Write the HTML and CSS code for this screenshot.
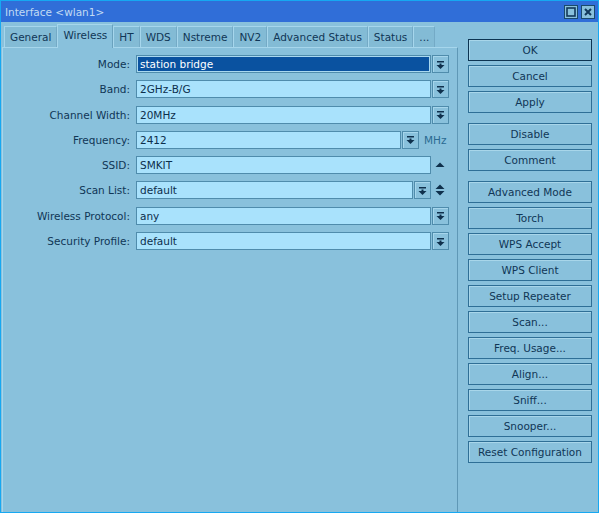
FILE: index.html
```html
<!DOCTYPE html>
<html lang="en">
<head>
    <meta charset="UTF-8">
    <title>Interface &lt;wlan1&gt;</title>
    <link rel="stylesheet" href="styles.css">
</head>
<body>
<div class="win">
    <div class="titlebar">
        <span class="title">Interface &lt;wlan1&gt;</span>
        <div class="wbtns">
            <span class="wbtn"><svg width="12" height="12" viewBox="0 0 12 12"><rect x="2" y="2" width="8" height="8" fill="none" stroke="#12385a" stroke-width="1.6"/></svg></span>
            <span class="wbtn"><svg width="12" height="12" viewBox="0 0 12 12"><path d="M3 3L9 9M9 3L3 9" stroke="#12385a" stroke-width="2"/></svg></span>
        </div>
    </div>
    <div class="body">
        <div class="main">
            <div class="tabs">
                <span class="tab">General</span>
                <span class="tab active">Wireless</span>
                <span class="tab">HT</span>
                <span class="tab">WDS</span>
                <span class="tab">Nstreme</span>
                <span class="tab">NV2</span>
                <span class="tab">Advanced Status</span>
                <span class="tab">Status</span>
                <span class="tab">...</span>
            </div>
            <div class="panel">
                <div class="row">
                    <label>Mode:</label>
                    <div class="field sel">station bridge</div>
                    <span class="dd"><svg width="9" height="9" viewBox="0 0 9 9"><path d="M1 1h7v1.5H1zM3.5 3.5h2V5H3.5zM0.5 5h8L4.5 9z" fill="#0f304c"/></svg></span>
                </div>
                <div class="row">
                    <label>Band:</label>
                    <div class="field">2GHz-B/G</div>
                    <span class="dd"><svg width="9" height="9" viewBox="0 0 9 9"><path d="M1 1h7v1.5H1zM3.5 3.5h2V5H3.5zM0.5 5h8L4.5 9z" fill="#0f304c"/></svg></span>
                </div>
                <div class="row">
                    <label>Channel Width:</label>
                    <div class="field">20MHz</div>
                    <span class="dd"><svg width="9" height="9" viewBox="0 0 9 9"><path d="M1 1h7v1.5H1zM3.5 3.5h2V5H3.5zM0.5 5h8L4.5 9z" fill="#0f304c"/></svg></span>
                </div>
                <div class="row">
                    <label>Frequency:</label>
                    <div class="field short">2412</div>
                    <span class="dd"><svg width="9" height="9" viewBox="0 0 9 9"><path d="M1 1h7v1.5H1zM3.5 3.5h2V5H3.5zM0.5 5h8L4.5 9z" fill="#0f304c"/></svg></span>
                    <span class="unit">MHz</span>
                </div>
                <div class="row">
                    <label>SSID:</label>
                    <div class="field">SMKIT</div>
                    <span class="arrows"><svg width="12" height="12" viewBox="0 0 12 12"><path d="M1.5 8h9L6 3.5z" fill="#0f304c"/></svg></span>
                </div>
                <div class="row">
                    <label>Scan List:</label>
                    <div class="field mid">default</div>
                    <span class="dd"><svg width="9" height="9" viewBox="0 0 9 9"><path d="M1 1h7v1.5H1zM3.5 3.5h2V5H3.5zM0.5 5h8L4.5 9z" fill="#0f304c"/></svg></span>
                    <span class="arrows"><svg width="12" height="14" viewBox="0 0 12 14"><path d="M1.5 6h9L6 1.5zM1.5 8h9L6 12.5z" fill="#0f304c"/></svg></span>
                </div>
                <div class="row">
                    <label>Wireless Protocol:</label>
                    <div class="field">any</div>
                    <span class="dd"><svg width="9" height="9" viewBox="0 0 9 9"><path d="M1 1h7v1.5H1zM3.5 3.5h2V5H3.5zM0.5 5h8L4.5 9z" fill="#0f304c"/></svg></span>
                </div>
                <div class="row">
                    <label>Security Profile:</label>
                    <div class="field">default</div>
                    <span class="dd"><svg width="9" height="9" viewBox="0 0 9 9"><path d="M1 1h7v1.5H1zM3.5 3.5h2V5H3.5zM0.5 5h8L4.5 9z" fill="#0f304c"/></svg></span>
                </div>
            </div>
        </div>
        <div class="side">
            <div class="grp">
                <span class="btn def">OK</span>
                <span class="btn">Cancel</span>
                <span class="btn">Apply</span>
            </div>
            <div class="grp">
                <span class="btn">Disable</span>
                <span class="btn">Comment</span>
            </div>
            <div class="grp">
                <span class="btn">Advanced Mode</span>
                <span class="btn">Torch</span>
                <span class="btn">WPS Accept</span>
                <span class="btn">WPS Client</span>
                <span class="btn">Setup Repeater</span>
                <span class="btn">Scan...</span>
                <span class="btn">Freq. Usage...</span>
                <span class="btn">Align...</span>
                <span class="btn">Sniff...</span>
                <span class="btn">Snooper...</span>
                <span class="btn">Reset Configuration</span>
            </div>
        </div>
    </div>
</div>
</body>
</html>
```
FILE: styles.css
```css
* {margin: 0; padding: 0; box-sizing: border-box;}
html, body {width: 599px; height: 513px; overflow: hidden;}
body {font-family: "DejaVu Sans", sans-serif; font-size: 10.5px; color: #103656; background: #89c1dc;}

.win {width: 599px; height: 513px; border: 1px solid #16a8f2; display: flex; flex-direction: column; background: #89c1dc;}
.titlebar {height: 21px; background: #306ed8; display: flex; align-items: center; justify-content: space-between; padding: 0 3px 0 4px;}
.title {color: #c2dbf3; font-size: 10.5px;}
.wbtns {display: flex; gap: 3px;}
.wbtn {width: 14px; height: 14px; background: #89c1dc; border: 1px solid #1b4a6c; display: flex; align-items: center; justify-content: center;}

.body {flex: 1; display: flex;}
.main {width: 457px; display: flex; flex-direction: column; padding-left: 1px;}

.tabs {display: flex; align-items: flex-end; padding-left: 2px; height: 25px;}
.tab {height: 21px; line-height: 20px; padding: 0 5px; border-top: 1px solid #a6d6ec; border-left: 1px solid #a6d6ec; border-right: 1px solid #74aac6; background: #83bbd5; color: #103656;}
.tab.active {height: 24px; margin-bottom: -1px; background: #89c1dc; position: relative; z-index: 1; line-height: 20px; border-right-color: #6aa2be;}

.panel {flex: 1; border-top: 1px solid #a6d6ec; border-left: 1px solid #a6d6ec; border-right: 1px solid #5f98b6; padding-top: 7px; display: flex; flex-direction: column; gap: 7.3px;}
.row {display: flex; align-items: center; height: 18px;}
.row label {width: 127px; text-align: right; margin-right: 6px;}
.field {width: 295px; height: 18px; line-height: 16px; padding-left: 3px; background: #a9e2fc; border: 1px solid #4f8cac; color: #0d2f4c;}
.field.short {width: 265px;}
.field.mid {width: 277px;}
.field.sel {background: #0a52a0; color: #fff; border-color: #4f8cac; box-shadow: inset 0 0 0 1px #a9d8f0;}
.dd {width: 17px; height: 18px; margin-left: 1px; border: 1px solid #4f8cac; box-shadow: inset 1px 1px 0 #a6d6ec; display: flex; align-items: center; justify-content: center;}
.unit {margin-left: 5px; color: #2a6a92;}
.arrows {margin-left: 3px; width: 12px; display: flex; align-items: center; justify-content: center;}

.side {flex: 1; padding: 17px 0 0 10px;}
.grp {display: flex; flex-direction: column; gap: 4px; margin-bottom: 10px;}
.btn {width: 124px; height: 22px; line-height: 20px; text-align: center; border: 1px solid #2f6f96; box-shadow: inset 1px 1px 0 #a8d6ea; color: #103656;}
.btn.def {border-color: #0c3452;}
```
